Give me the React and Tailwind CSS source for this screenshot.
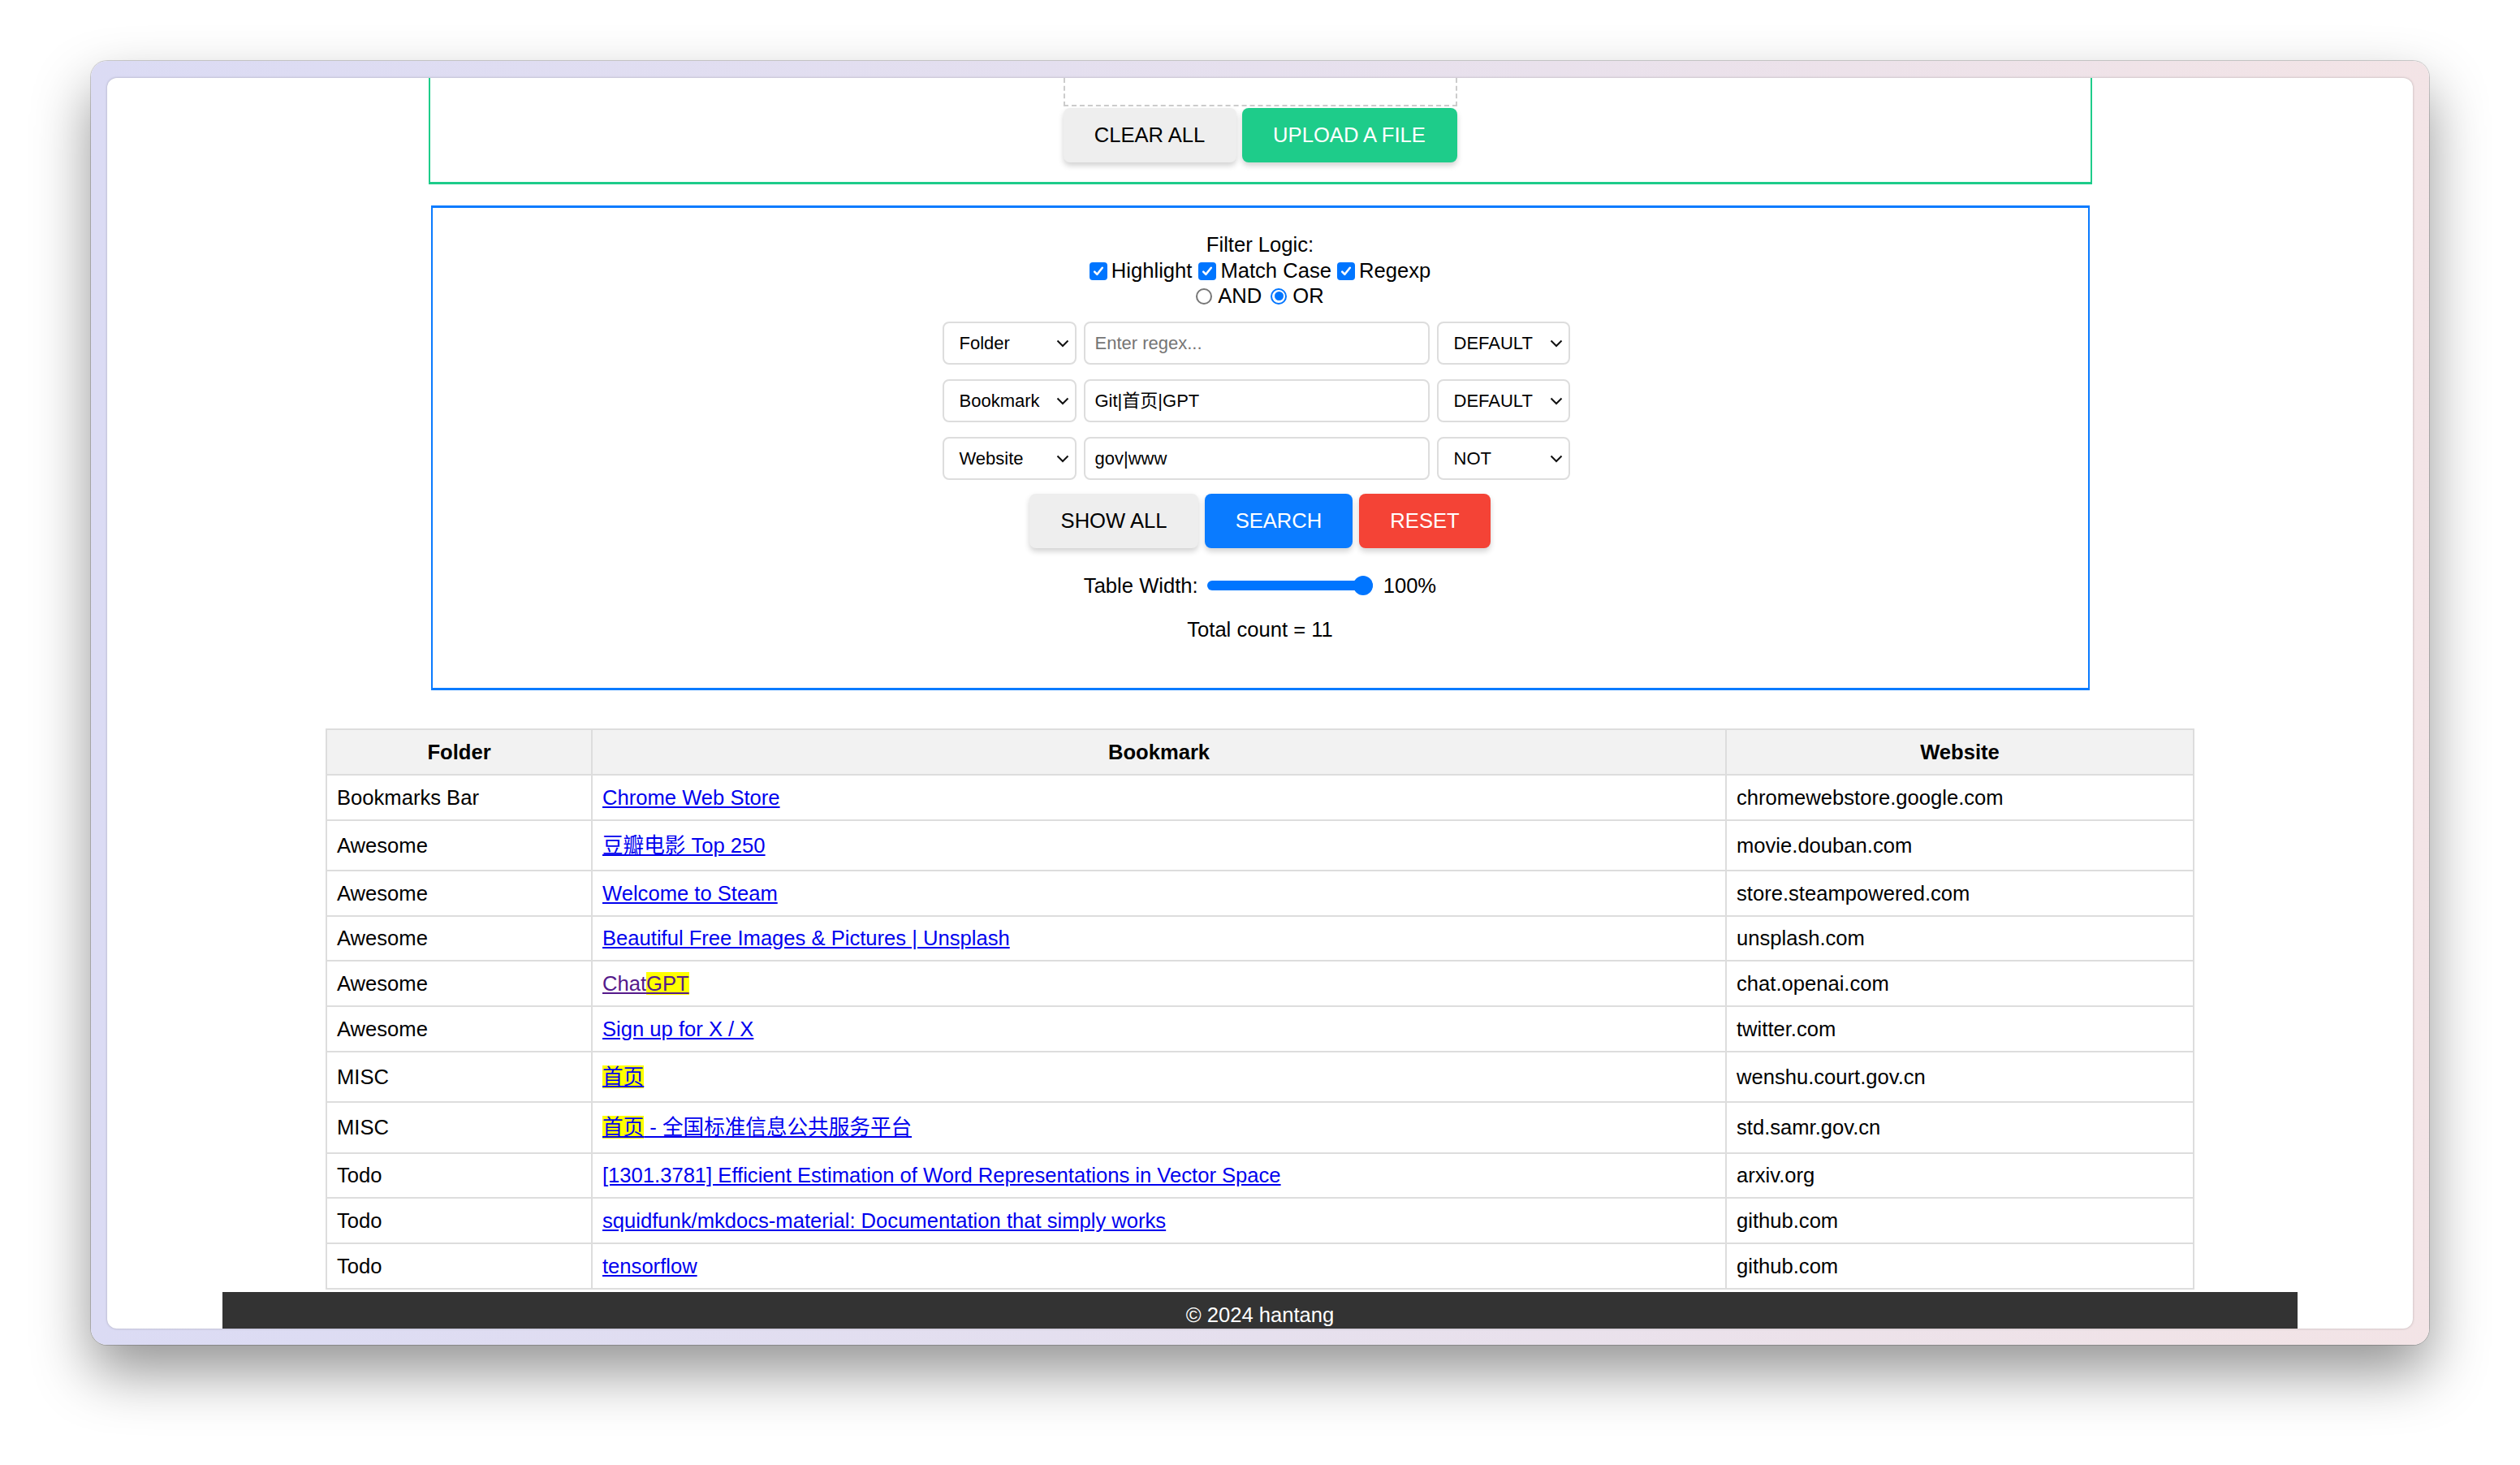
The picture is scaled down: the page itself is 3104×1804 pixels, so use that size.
import React from 'react';

const FONT = "font-['Liberation_Sans','Noto_Sans_CJK_SC',sans-serif]";

function Chevron() {
  return (
    <svg width="16" height="10" viewBox="0 0 16 10" className="shrink-0">
      <path d="M1.5 1.5 L8 8 L14.5 1.5" stroke="#111" strokeWidth="2" fill="none" />
    </svg>
  );
}

function Select({ w, label }) {
  return (
    <div className={`${w} h-[53px] border-2 border-[#dddddd] rounded-[8px] bg-white flex items-center justify-between pl-[19px] pr-[7px] text-[22px] text-black`}>
      <span>{label}</span>
      <Chevron />
    </div>
  );
}

function TextInput({ value, placeholder }) {
  return (
    <div className="w-[426px] h-[53px] border-2 border-[#dddddd] rounded-[8px] bg-white flex items-center pl-[12px] text-[22px]">
      {value ? <span className="text-black">{value}</span> : <span className="text-[#757575]">{placeholder}</span>}
    </div>
  );
}

function Checkbox() {
  return (
    <span className="w-[22px] h-[22px] rounded-[4px] bg-[#0075ff] flex items-center justify-center shrink-0">
      <svg width="16" height="16" viewBox="0 0 16 16">
        <path d="M3.2 8.6 L6.4 11.8 L12.8 3.8" stroke="white" strokeWidth="2.6" fill="none" strokeLinecap="round" strokeLinejoin="round" />
      </svg>
    </span>
  );
}

function RadioOff() {
  return <span className="w-[20px] h-[20px] rounded-full border-2 border-[#767676] bg-white shrink-0" />;
}

function RadioOn() {
  return (
    <span className="w-[20px] h-[20px] rounded-full border-2 border-[#0075ff] bg-white flex items-center justify-center shrink-0">
      <span className="w-[11px] h-[11px] rounded-full bg-[#0075ff]" />
    </span>
  );
}

const rows = [
  { folder: 'Bookmarks Bar', h: 'h-[56px]', link: [{ t: 'Chrome Web Store' }], site: 'chromewebstore.google.com' },
  { folder: 'Awesome', h: 'h-[62px]', link: [{ t: '豆瓣电影 Top 250' }], site: 'movie.douban.com' },
  { folder: 'Awesome', h: 'h-[56px]', link: [{ t: 'Welcome to Steam' }], site: 'store.steampowered.com' },
  { folder: 'Awesome', h: 'h-[55px]', link: [{ t: 'Beautiful Free Images & Pictures | Unsplash' }], site: 'unsplash.com' },
  { folder: 'Awesome', h: 'h-[56px]', visited: true, link: [{ t: 'Chat' }, { t: 'GPT', hl: true }], site: 'chat.openai.com' },
  { folder: 'Awesome', h: 'h-[56px]', link: [{ t: 'Sign up for X / X' }], site: 'twitter.com' },
  { folder: 'MISC', h: 'h-[62px]', link: [{ t: '首页', hl: true }], site: 'wenshu.court.gov.cn' },
  { folder: 'MISC', h: 'h-[63px]', link: [{ t: '首页', hl: true }, { t: ' - 全国标准信息公共服务平台' }], site: 'std.samr.gov.cn' },
  { folder: 'Todo', h: 'h-[55px]', link: [{ t: '[1301.3781] Efficient Estimation of Word Representations in Vector Space' }], site: 'arxiv.org' },
  { folder: 'Todo', h: 'h-[56px]', link: [{ t: 'squidfunk/mkdocs-material: Documentation that simply works' }], site: 'github.com' },
  { folder: 'Todo', h: 'h-[56px]', link: [{ t: 'tensorflow' }], site: 'github.com' },
];

export default function App() {
  return (
    <div className={`w-[3104px] h-[1804px] bg-white overflow-hidden pt-[75px] pl-[112px] ${FONT}`}>
      {/* window frame */}
      <div className="w-[2880px] h-[1581px] rounded-[20px] bg-linear-to-r from-[#dbdbf4] via-[#e6e0ee] to-[#f3e4e6] pt-[21px] px-[20px] pb-[20px] shadow-[0_0_0_1px_rgba(0,0,0,0.18),0_34px_70px_rgba(0,0,0,0.42)]">
        <div className="w-[2840px] h-[1540px] bg-white rounded-[12px] overflow-hidden shadow-[0_0_3px_rgba(0,0,0,0.25)] text-[25.6px] leading-[31px] text-black">
          {/* upload box (scrolled, top hidden) */}
          <div className="w-[2049px] mx-auto border-x-2 border-b-[3px] border-[#1ecc8a] pb-[24px]">
            <div className="w-[485px] h-[35px] mx-auto border-2 border-t-0 border-dashed border-[#cccccc]" />
            <div className="flex justify-center gap-[7px] mt-[2px]">
              <div className="w-[213px] h-[67px] rounded-[8px] bg-[#eeeeee] flex items-center justify-center shadow-[0_4px_7px_rgba(0,0,0,0.18)]">CLEAR ALL</div>
              <div className="w-[265px] h-[67px] rounded-[8px] bg-[#1ecc8a] text-white flex items-center justify-center shadow-[0_4px_7px_rgba(0,0,0,0.18)]">UPLOAD A FILE</div>
            </div>
          </div>

          {/* filter box */}
          <div className="w-[2043px] mx-auto mt-[26px] border-x-2 border-y-[3px] border-[#0a7bff] pt-[30px] pb-[56px] text-center">
            <div>Filter Logic:</div>
            <div className="flex justify-center items-center h-[31px] mt-[1px]">
              <Checkbox />
              <span className="ml-[5px]">Highlight</span>
              <span className="ml-[8px]"><Checkbox /></span>
              <span className="ml-[5px]">Match Case</span>
              <span className="ml-[7px]"><Checkbox /></span>
              <span className="ml-[5px]">Regexp</span>
            </div>
            <div className="flex justify-center items-center h-[31px]">
              <RadioOff />
              <span className="ml-[7px]">AND</span>
              <span className="ml-[11px] flex"><RadioOn /></span>
              <span className="ml-[7px]">OR</span>
            </div>

            <div className="mt-[16px] flex flex-col gap-[18px] pr-[10px]">
              <div className="flex justify-center gap-[9px]">
                <Select w="w-[165px]" label="Folder" />
                <TextInput placeholder="Enter regex..." />
                <Select w="w-[164px]" label="DEFAULT" />
              </div>
              <div className="flex justify-center gap-[9px]">
                <Select w="w-[165px]" label="Bookmark" />
                <TextInput value="Git|首页|GPT" />
                <Select w="w-[164px]" label="DEFAULT" />
              </div>
              <div className="flex justify-center gap-[9px]">
                <Select w="w-[165px]" label="Website" />
                <TextInput value="gov|www" />
                <Select w="w-[164px]" label="NOT" />
              </div>
            </div>

            <div className="mt-[17px] flex justify-center gap-[8px]">
              <div className="w-[208px] h-[67px] rounded-[8px] bg-[#eeeeee] flex items-center justify-center shadow-[0_4px_7px_rgba(0,0,0,0.18)]">SHOW ALL</div>
              <div className="w-[182px] h-[67px] rounded-[8px] bg-[#0a7bff] text-white flex items-center justify-center shadow-[0_4px_7px_rgba(0,0,0,0.18)]">SEARCH</div>
              <div className="w-[162px] h-[67px] rounded-[8px] bg-[#f44336] text-white flex items-center justify-center shadow-[0_4px_7px_rgba(0,0,0,0.18)]">RESET</div>
            </div>

            <div className="mt-[29px] h-[34px] flex justify-center items-center">
              <span>Table Width:</span>
              <div className="ml-[11px] w-[204px] h-[12px] rounded-full bg-[#0075ff] relative">
                <span className="absolute right-0 top-1/2 -translate-y-1/2 w-[24px] h-[24px] rounded-full bg-[#0075ff]" />
              </div>
              <span className="ml-[13px]">100%</span>
            </div>

            <div className="mt-[22px]">Total count = 11</div>
          </div>

          {/* table */}
          <table className="mt-[47px] mx-auto w-[2300px] table-fixed border-collapse">
            <colgroup>
              <col className="w-[327px]" />
              <col className="w-[1397px]" />
              <col className="w-[576px]" />
            </colgroup>
            <thead>
              <tr className="h-[56px] bg-[#f2f2f2]">
                <th className="border-2 border-[#dddddd] font-bold text-center px-[12px]">Folder</th>
                <th className="border-2 border-[#dddddd] font-bold text-center px-[12px]">Bookmark</th>
                <th className="border-2 border-[#dddddd] font-bold text-center px-[12px]">Website</th>
              </tr>
            </thead>
            <tbody>
              {rows.map((r, i) => (
                <tr key={i} className={r.h}>
                  <td className="border-2 border-[#dddddd] px-[12px] text-left">{r.folder}</td>
                  <td className="border-2 border-[#dddddd] px-[12px] text-left">
                    <a className={`underline ${r.visited ? 'text-[#551a8b]' : 'text-[#0000ee]'}`}>
                      {r.link.map((p, j) => (
                        <span key={j} className={p.hl ? 'bg-[#ffff00]' : ''}>{p.t}</span>
                      ))}
                    </a>
                  </td>
                  <td className="border-2 border-[#dddddd] px-[12px] text-left">{r.site}</td>
                </tr>
              ))}
            </tbody>
          </table>

          {/* footer */}
          <div className="mt-[3px] w-[2556px] mx-auto bg-[#333333] text-white text-center pt-[13px] pb-[20px]">
            © 2024 hantang
          </div>
        </div>
      </div>
    </div>
  );
}
